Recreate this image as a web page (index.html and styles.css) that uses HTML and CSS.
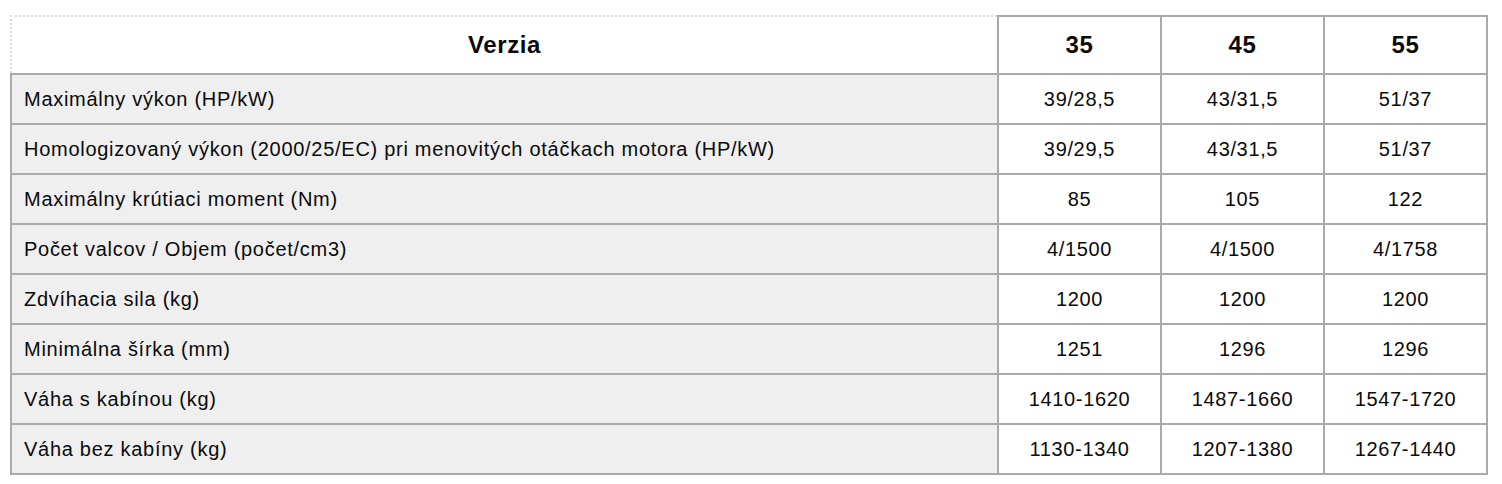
FILE: index.html
```html
<!DOCTYPE html>
<html lang="sk">
<head>
<meta charset="utf-8">
<title>Verzia</title>
<link rel="stylesheet" href="styles.css">
</head>
<body>
<div class="wrap">
<table class="specs">
  <thead>
    <tr>
      <th class="head-label">Verzia</th>
      <th class="head-val">35</th>
      <th class="head-val">45</th>
      <th class="head-val">55</th>
    </tr>
  </thead>
  <tbody>
    <tr><td class="label">Maximálny výkon (HP/kW)</td><td class="val">39/28,5</td><td class="val">43/31,5</td><td class="val">51/37</td></tr>
    <tr><td class="label">Homologizovaný výkon (2000/25/EC) pri menovitých otáčkach motora (HP/kW)</td><td class="val">39/29,5</td><td class="val">43/31,5</td><td class="val">51/37</td></tr>
    <tr><td class="label">Maximálny krútiaci moment (Nm)</td><td class="val">85</td><td class="val">105</td><td class="val">122</td></tr>
    <tr><td class="label">Počet valcov / Objem (počet/cm3)</td><td class="val">4/1500</td><td class="val">4/1500</td><td class="val">4/1758</td></tr>
    <tr><td class="label">Zdvíhacia sila (kg)</td><td class="val">1200</td><td class="val">1200</td><td class="val">1200</td></tr>
    <tr><td class="label">Minimálna šírka (mm)</td><td class="val">1251</td><td class="val">1296</td><td class="val">1296</td></tr>
    <tr><td class="label">Váha s kabínou (kg)</td><td class="val">1410-1620</td><td class="val">1487-1660</td><td class="val">1547-1720</td></tr>
    <tr><td class="label">Váha bez kabíny (kg)</td><td class="val">1130-1340</td><td class="val">1207-1380</td><td class="val">1267-1440</td></tr>
  </tbody>
</table>
</div>
</body>
</html>
```
FILE: styles.css
```css
html, body {
  margin: 0;
  padding: 0;
  background: #ffffff;
}
.wrap {
  padding: 15px 0 0 10px;
}
.specs {
  border-collapse: collapse;
  width: 1478px;
  font-family: "Liberation Sans", Arial, Helvetica, sans-serif;
  color: #0a0a0a;
  font-size: 20px;
  letter-spacing: 0.65px;
}
.specs th,
.specs td {
  border: 2px solid #aaaaaa;
  text-align: center;
}
.specs th {
  font-weight: bold;
  font-size: 24px;
  line-height: 28px;
  letter-spacing: 0.6px;
  padding: 14px 12px;
  background: #ffffff;
}
.specs th.head-label {
  border-top: 2px dotted #d9d9d9;
  border-left: 2px dotted #d9d9d9;
}
.specs td {
  line-height: 24px;
  padding: 12px 12px;
}
.specs .label {
  text-align: left;
  background: #efefef;
  letter-spacing: 0.72px;
}
.specs .head-val,
.specs .val {
  width: 137px;
}
```
